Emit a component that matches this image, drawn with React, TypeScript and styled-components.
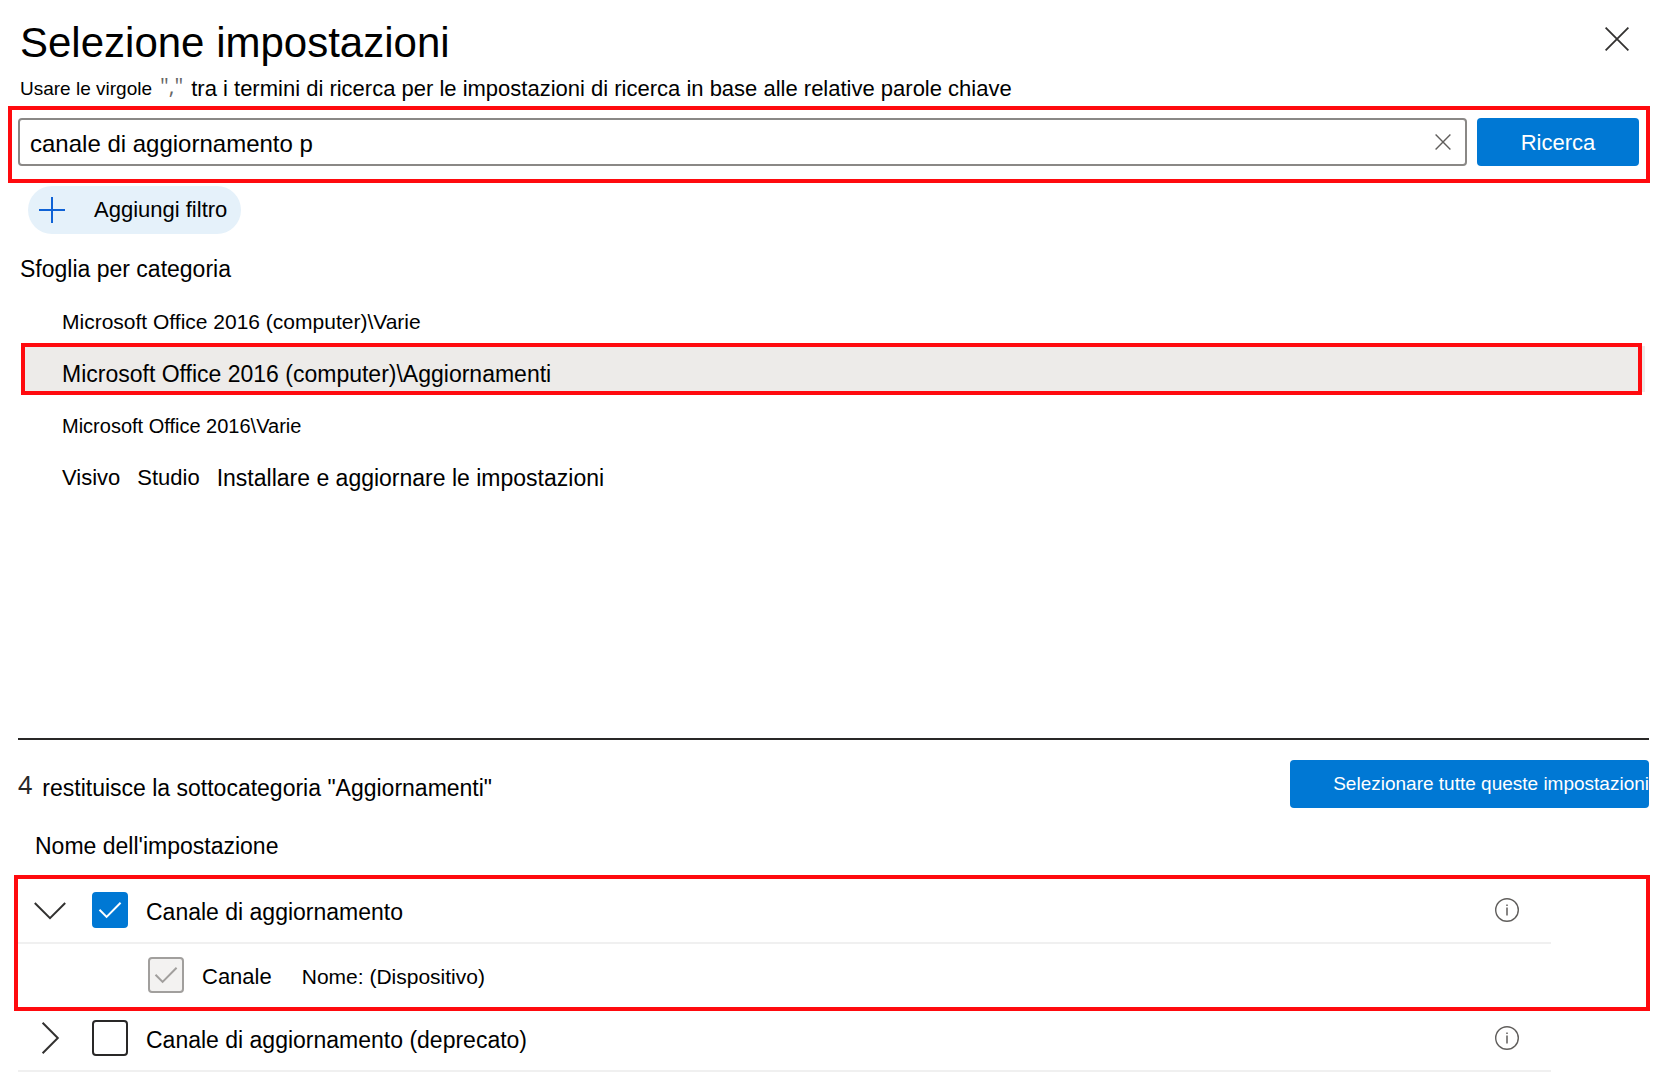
import React, { useState } from "react";
import styled, { createGlobalStyle } from "styled-components";

const GlobalStyle = createGlobalStyle`
  *, *::before, *::after { box-sizing: border-box; }
  body {
    margin: 0;
    background: #fff;
    color: #000;
    font-family: "Liberation Sans", Arial, sans-serif;
    font-size: 22px;
    line-height: 28px;
  }
  button, input { font: inherit; color: inherit; }
`;

const RED = "#ff0a0e";
const BLUE = "#0078d4";

const Panel = styled.main`
  padding: 19px 16px 0 8px;
`;

const Header = styled.header`
  display: flex;
  justify-content: space-between;
  align-items: flex-start;
  height: 48px;
  padding: 0 13px 0 12px;
`;

const Title = styled.h1`
  margin: 0;
  font-size: 42px;
  line-height: 48px;
  font-weight: 400;
  white-space: nowrap;
`;

const IconButton = styled.button<{ $size: number }>`
  display: flex;
  flex: none;
  align-items: center;
  justify-content: center;
  width: ${(p) => p.$size}px;
  height: ${(p) => p.$size}px;
  padding: 0;
  border: 0;
  background: none;
  cursor: pointer;
`;

const Hint = styled.p`
  display: flex;
  align-items: flex-start;
  margin: 8px 0 3px;
  padding-left: 12px;
  white-space: nowrap;
`;

const Text = styled.span<{ $size: number }>`
  font-size: ${(p) => p.$size}px;
  white-space: nowrap;
`;

const Quote = styled.span`
  padding: 0 8px;
  color: #666;
  font-family: "Open Sans", "Noto Sans", sans-serif;
  font-size: 22px;
  line-height: 20px;
`;

const SearchForm = styled.form`
  display: flex;
  gap: 10px;
  padding: 8px 7px 13px 6px;
  border: 4px solid ${RED};
`;

const SearchBox = styled.div`
  display: flex;
  flex: 1;
  align-items: center;
  height: 48px;
  padding: 0 6px 0 10px;
  border: 2px solid #8a8886;
  border-radius: 4px;
`;

const SearchInput = styled.input`
  flex: 1;
  min-width: 0;
  height: 40px;
  padding: 3px 0 0;
  border: 0;
  outline: 0;
  background: none;
  font-size: 24px;
`;

const PrimaryButton = styled.button`
  flex: none;
  width: 162px;
  height: 48px;
  padding: 2px 0 0;
  border: 0;
  border-radius: 4px;
  background: ${BLUE};
  color: #fff;
  cursor: pointer;
`;

const SelectAllButton = styled(PrimaryButton)`
  width: auto;
  padding: 0 0 0 43px;
  font-size: 19px;
  white-space: nowrap;
`;

const FilterPill = styled.button`
  display: flex;
  align-items: center;
  gap: 29px;
  height: 48px;
  margin: 3px 0 20px 20px;
  padding: 0 14px 0 11px;
  border: 0;
  border-radius: 24px;
  background: #e5f1fa;
  cursor: pointer;
`;

const Browse = styled.section`
  min-height: 484px;
`;

const SectionTitle = styled.h2<{ $indent: number }>`
  margin: 0;
  padding-left: ${(p) => p.$indent}px;
  font-size: 23px;
  line-height: 30px;
  font-weight: 400;
`;

const CategoryList = styled.ul`
  margin: 7px 8px 0 13px;
  padding: 0;
  list-style: none;
`;

const Category = styled.button<{ $selected: boolean; $size: number }>`
  display: flex;
  align-items: center;
  gap: 17px;
  width: 100%;
  height: 52px;
  padding: 10px 0 0 37px;
  border: 4px solid ${(p) => (p.$selected ? RED : "transparent")};
  background: ${(p) => (p.$selected ? "#edebe9" : "none")};
  box-shadow: ${(p) => (p.$selected ? "6px 0 0 -3px #edebe9" : "none")};
  font-size: ${(p) => p.$size}px;
  white-space: nowrap;
  cursor: pointer;
`;

const Results = styled.section`
  margin: 0 1px 0 10px;
  border-top: 2px solid #292827;
`;

const ResultsBar = styled.div`
  display: flex;
  justify-content: space-between;
  align-items: flex-start;
  padding: 20px 0 23px;
`;

const Summary = styled.p`
  display: flex;
  align-items: flex-start;
  gap: 10px;
  margin: 0;
  padding-top: 12px;
  line-height: 32px;
`;

const Count = styled.span`
  color: #292827;
  font-family: "Noto Sans", "Open Sans", sans-serif;
  font-size: 25px;
  line-height: 24px;
`;

const SettingList = styled.ul`
  margin: 18px 3px 0 0;
  padding: 0;
  list-style: none;
`;

const SettingGroup = styled.li<{ $marked: boolean }>`
  outline: ${(p) => (p.$marked ? `4px solid ${RED}` : "none")};
`;

const SettingRow = styled.div<{ $nested?: boolean }>`
  display: flex;
  align-items: center;
  height: ${(p) => (p.$nested ? 63 : 65)}px;
  margin-right: 95px;
  padding: 0 32px 2px ${(p) => (p.$nested ? 130 : 16)}px;
  border-bottom: ${(p) => (p.$nested ? 0 : 2)}px solid #f0f0f0;
`;

const Expander = styled(IconButton)`
  margin-right: 26px;
`;

const InfoButton = styled(IconButton)`
  margin-left: auto;
`;

const Option = styled.label`
  display: flex;
  align-items: center;
  gap: 18px;
`;

const OptionText = styled.span<{ $size: number }>`
  padding-top: 4px;
  font-size: ${(p) => p.$size}px;
  white-space: nowrap;

  & + & { margin-left: 12px; }
`;

const CheckFrame = styled.span`
  display: grid;
  width: 36px;
  height: 36px;

  & > * { grid-area: 1 / 1; }
  & > svg { pointer-events: none; }
`;

const CheckInput = styled.input`
  appearance: none;
  width: 36px;
  height: 36px;
  margin: 0;
  border: 2px solid #292827;
  border-radius: 4px;
  background: #fff;

  &:checked { border-color: ${BLUE}; background: ${BLUE}; }
  &:disabled { border-color: #a19f9d; background: #f3f2f1; }
`;

function Cross({ size, color, width }: { size: number; color: string; width: number }) {
  return (
    <svg width={size} height={size} viewBox={`0 0 ${size} ${size}`} aria-hidden="true">
      <path
        d={`M.6 .6L${size - 0.6} ${size - 0.6}M${size - 0.6} .6L.6 ${size - 0.6}`}
        stroke={color}
        strokeWidth={width}
        fill="none"
      />
    </svg>
  );
}

function Plus() {
  return (
    <svg width="26" height="26" viewBox="0 0 26 26" aria-hidden="true">
      <path d="M13 0V26M0 13H26" stroke="#0f62d6" strokeWidth="2" fill="none" />
    </svg>
  );
}

function Chevron({ open }: { open: boolean }) {
  return (
    <svg width="32" height="32" viewBox="0 0 32 32" aria-hidden="true">
      <path
        d={open ? "M.8 9L16 24.2L31.2 9" : "M8.6 .8L23.8 16L8.6 31.2"}
        stroke="#323130"
        strokeWidth="2"
        fill="none"
      />
    </svg>
  );
}

function InfoIcon() {
  return (
    <svg width="24" height="24" viewBox="0 0 24 24" aria-hidden="true">
      <circle cx="12" cy="12" r="11.3" fill="none" stroke="#605e5c" strokeWidth="1.4" />
      <path d="M12 9.5V17.5M12 6.4V8" stroke="#605e5c" strokeWidth="1.5" />
    </svg>
  );
}

interface CheckProps {
  id: string;
  checked: boolean;
  disabled?: boolean;
  onChange?: () => void;
}

function Check({ id, checked, disabled, onChange }: CheckProps) {
  return (
    <CheckFrame>
      <CheckInput
        id={id}
        type="checkbox"
        checked={checked}
        disabled={disabled}
        onChange={onChange ?? (() => undefined)}
      />
      {checked && (
        <svg width="36" height="36" viewBox="0 0 36 36" aria-hidden="true">
          <path
            d="M7.5 17.8L14.6 24.9L28.6 10.8"
            stroke={disabled ? "#a19f9d" : "#fff"}
            strokeWidth="2"
            fill="none"
          />
        </svg>
      )}
    </CheckFrame>
  );
}

const categories = [
  { parts: ["Microsoft Office 2016 (computer)\\Varie"], size: 21 },
  { parts: ["Microsoft Office 2016 (computer)\\Aggiornamenti"], size: 23 },
  { parts: ["Microsoft Office 2016\\Varie"], size: 20 },
  { parts: ["Visivo", "Studio", "Installare e aggiornare le impostazioni"], size: 22 },
];

export default function App() {
  const [query, setQuery] = useState("canale di aggiornamento p");
  const [selected, setSelected] = useState(1);
  const [channel, setChannel] = useState(true);
  const [deprecated, setDeprecated] = useState(false);

  return (
    <>
      <GlobalStyle />
      <Panel>
        <Header>
          <Title>Selezione impostazioni</Title>
          <IconButton $size={40} type="button" aria-label="Chiudi">
            <Cross size={24} color="#323130" width={1.8} />
          </IconButton>
        </Header>
        <Hint>
          <Text $size={19}>Usare le virgole</Text>
          <Quote>","</Quote>
          <Text $size={22}>
            tra i termini di ricerca per le impostazioni di ricerca in base alle relative parole chiave
          </Text>
        </Hint>

        <SearchForm onSubmit={(e) => e.preventDefault()}>
          <SearchBox>
            <SearchInput
              aria-label="Cerca impostazioni"
              value={query}
              onChange={(e) => setQuery(e.target.value)}
            />
            <IconButton $size={32} type="button" aria-label="Cancella" onClick={() => setQuery("")}>
              <Cross size={16} color="#605e5c" width={1.4} />
            </IconButton>
          </SearchBox>
          <PrimaryButton type="submit">Ricerca</PrimaryButton>
        </SearchForm>

        <FilterPill type="button">
          <Plus />
          Aggiungi filtro
        </FilterPill>

        <Browse>
          <SectionTitle $indent={12}>Sfoglia per categoria</SectionTitle>
          <CategoryList>
            {categories.map((c, i) => (
              <li key={i}>
                <Category
                  type="button"
                  $selected={i === selected}
                  $size={c.size}
                  onClick={() => setSelected(i)}
                >
                  {c.parts.map((part, n) => (
                    <Text key={part} $size={n === 2 ? 23 : c.size}>
                      {part}
                    </Text>
                  ))}
                </Category>
              </li>
            ))}
          </CategoryList>
        </Browse>

        <Results>
          <ResultsBar>
            <Summary>
              <Count>4</Count>
              <Text $size={23}>restituisce la sottocategoria "Aggiornamenti"</Text>
            </Summary>
            <SelectAllButton type="button">Selezionare tutte queste impostazioni</SelectAllButton>
          </ResultsBar>
          <SectionTitle $indent={17}>Nome dell'impostazione</SectionTitle>
          <SettingList>
            <SettingGroup $marked>
              <SettingRow>
                <Expander $size={32} type="button" aria-label="Comprimi" aria-expanded="true">
                  <Chevron open />
                </Expander>
                <Option htmlFor="channel">
                  <Check id="channel" checked={channel} onChange={() => setChannel(!channel)} />
                  <OptionText $size={23}>Canale di aggiornamento</OptionText>
                </Option>
                <InfoButton $size={24} type="button" aria-label="Informazioni">
                  <InfoIcon />
                </InfoButton>
              </SettingRow>
              <SettingRow $nested>
                <Option htmlFor="channel-name">
                  <Check id="channel-name" checked disabled />
                  <OptionText $size={22}>Canale</OptionText>
                  <OptionText $size={21}>Nome: (Dispositivo)</OptionText>
                </Option>
              </SettingRow>
            </SettingGroup>
            <SettingGroup $marked={false}>
              <SettingRow>
                <Expander $size={32} type="button" aria-label="Espandi" aria-expanded="false">
                  <Chevron open={false} />
                </Expander>
                <Option htmlFor="deprecated">
                  <Check
                    id="deprecated"
                    checked={deprecated}
                    onChange={() => setDeprecated(!deprecated)}
                  />
                  <OptionText $size={23}>Canale di aggiornamento (deprecato)</OptionText>
                </Option>
                <InfoButton $size={24} type="button" aria-label="Informazioni">
                  <InfoIcon />
                </InfoButton>
              </SettingRow>
            </SettingGroup>
          </SettingList>
        </Results>
      </Panel>
    </>
  );
}
